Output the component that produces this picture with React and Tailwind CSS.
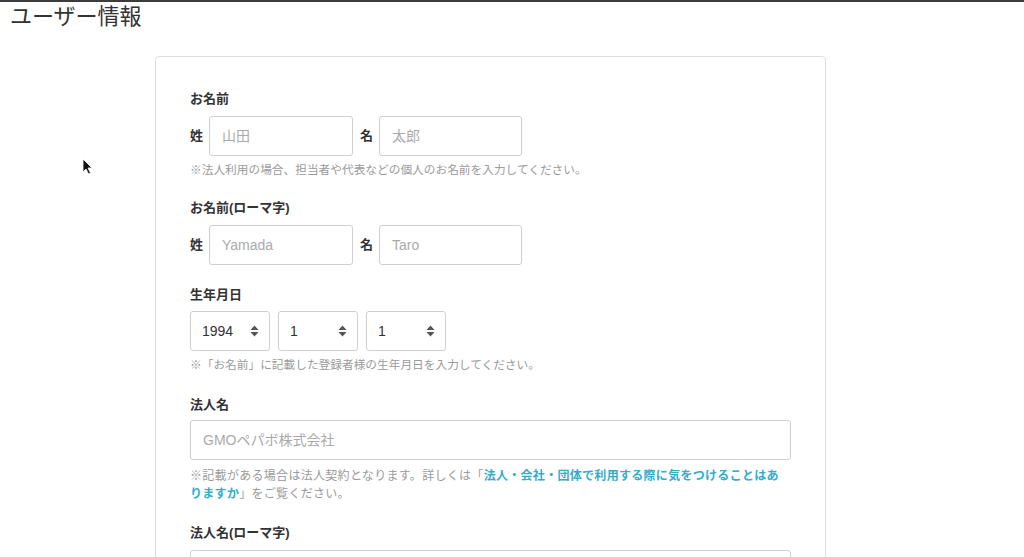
import React from "react";

const font = { fontFamily: '"Liberation Sans", "Noto Sans CJK JP", sans-serif' };

function TextInput({ placeholder, className = "" }) {
  return (
    <div
      className={`h-10 border border-[#cfcfcf] rounded-[3px] flex items-center pl-3 text-[14px] text-[#aaaaaa] bg-white ${className}`}
    >
      {placeholder}
    </div>
  );
}

function Arrows() {
  return (
    <svg width="9" height="12" viewBox="0 0 9 12" className="shrink-0">
      <path d="M4.5 0.5 L8.5 5 L0.5 5 Z" fill="#555" />
      <path d="M4.5 11.5 L8.5 7 L0.5 7 Z" fill="#555" />
    </svg>
  );
}

function Select({ value }) {
  return (
    <div className="w-[80px] h-10 border border-[#cfcfcf] rounded-[3px] flex items-center justify-between pl-[11px] pr-[10px] text-[14px] text-[#333]">
      <span>{value}</span>
      <Arrows />
    </div>
  );
}

function Label({ children, className = "" }) {
  return (
    <div className={`h-5 leading-5 text-[13px] font-bold text-[#333] ${className}`}>
      {children}
    </div>
  );
}

function Note({ children, className = "" }) {
  return (
    <div className={`leading-[18px] text-[#9a9a9a] ${className}`}>
      {children}
    </div>
  );
}

function NameRow({ a, b, className = "" }) {
  return (
    <div className={`flex items-center ${className}`}>
      <span className="text-[13px] font-bold text-[#333] w-[13px]">姓</span>
      <TextInput placeholder={a} className="ml-[6px] w-[144px]" />
      <span className="text-[13px] font-bold text-[#333] w-[13px] ml-[7px]">名</span>
      <TextInput placeholder={b} className="ml-[6px] w-[143px]" />
    </div>
  );
}

export default function App() {
  return (
    <div className="relative w-[1024px] h-[557px] overflow-hidden bg-white" style={font}>
      <div className="h-[2px] bg-[#3c3c3c]" />
      <div className="mt-[1px] pl-[10px] h-[28px] leading-[28px] text-[22px] text-[#333]">
        ユーザー情報
      </div>
      <div className="mt-[25px] ml-[155px] w-[671px] border border-[#dddddd] rounded-[4px] pt-[32px] pl-[34px] pr-[34px] pb-[60px]">
        <Label>お名前</Label>
        <NameRow a="山田" b="太郎" className="mt-[7px]" />
        <Note className="mt-[5px] text-[11.7px]">※法人利用の場合、担当者や代表などの個人のお名前を入力してください。</Note>

        <Label className="mt-[19px]">お名前(ローマ字)</Label>
        <NameRow a="Yamada" b="Taro" className="mt-[7px]" />

        <Label className="mt-[20px]">生年月日</Label>
        <div className="mt-[6px] flex gap-2">
          <Select value="1994" />
          <Select value="1" />
          <Select value="1" />
        </div>
        <Note className="mt-[5px] text-[11.7px]">※「お名前」に記載した登録者様の生年月日を入力してください。</Note>

        <Label className="mt-[21px]">法人名</Label>
        <TextInput placeholder="GMOペパボ株式会社" className="mt-[5px] w-[601px]" />
        <Note className="mt-[7px] text-[12px] leading-[17px] tracking-[0.3px] max-w-[595px]">
          ※記載がある場合は法人契約となります。詳しくは「
          <span className="text-[#33adc8] font-semibold">法人・会社・団体で利用する際に気をつけることはありますか</span>
          」をご覧ください。
        </Note>

        <Label className="mt-[20px]">法人名(ローマ字)</Label>
        <TextInput placeholder="" className="mt-[7px] w-[601px]" />
      </div>

      <svg
        className="absolute left-[82px] top-[158px]"
        width="11"
        height="17"
        viewBox="0 0 11 17"
      >
        <path d="M1 1 L1 14 L4 11 L6.5 16 L8.5 15 L6 10 L10 10 Z" fill="#111" stroke="#fff" strokeWidth="0.8" />
      </svg>
    </div>
  );
}
